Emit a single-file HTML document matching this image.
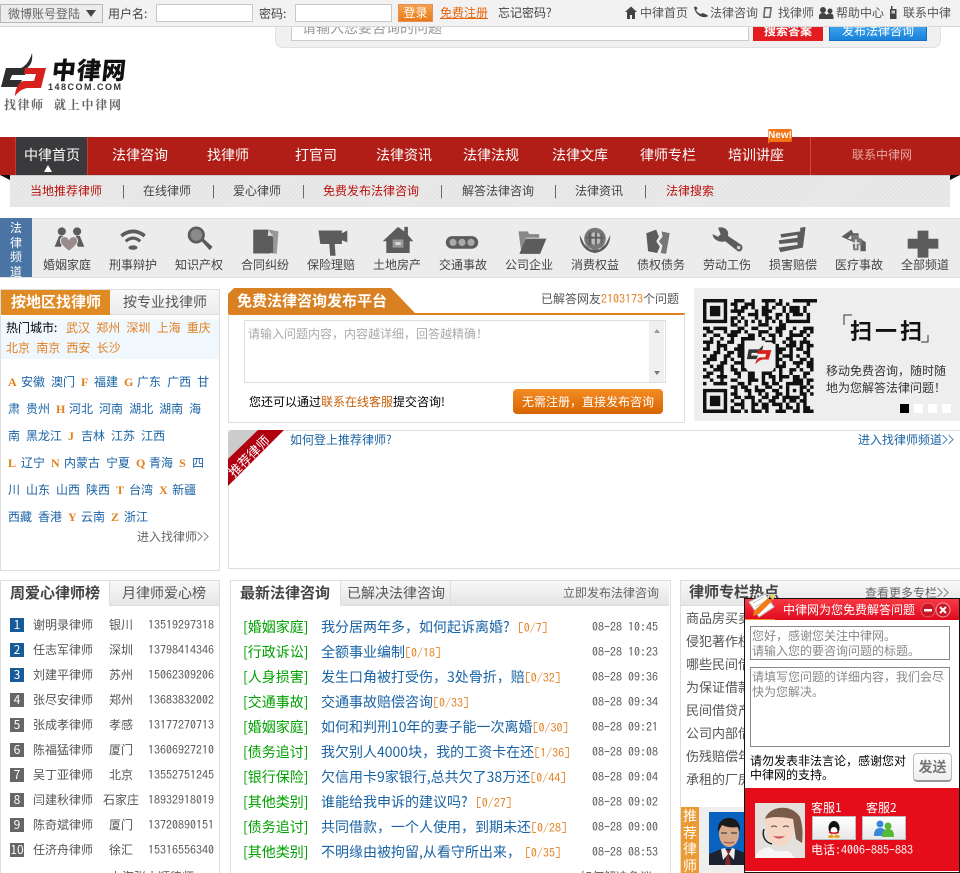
<!DOCTYPE html>
<html lang="zh"><head><meta charset="utf-8"><title>中律网</title>
<style>
html,body{margin:0;padding:0;background:#fff;width:960px;height:873px;overflow:hidden}
body{position:relative;font:12px/14px "WenQuanYi Zen Hei","Noto Sans CJK SC",sans-serif;color:#555}
div,span.a,svg.a{position:absolute}
#p{left:0;top:0;width:960px;height:873px;overflow:hidden}
.a,.t{position:absolute;white-space:nowrap}
.w{color:#fff}.o{color:#e08020}.b{color:#1a63a5}.r{color:#b8120e}
.n{font-size:14px;color:#fff;top:148px}
.s{top:184px;color:#444}
.c{top:258px;width:48px;text-align:center;color:#444}
.row{left:8px;white-space:nowrap;color:#1a63a5;height:14px}
.row span{margin-right:6px}
.row i{display:inline-block;width:13px;font:bold 12px/14px "Liberation Serif",serif;color:#e08020}
.rk{left:10px;width:14px;height:14px;color:#fff;text-align:center;line-height:14px;background:#666}
.rk.bl{background:#175c99}
.rl{left:33px;color:#555}.rc{left:100px;width:42px;text-align:center;color:#555}.rp{left:148px;color:#555}
.rp,.m3,.mn,.m2 em{font-family:"IPAGothic","Liberation Mono",monospace}
.m1{left:243px;color:#00a000;font-size:14px}
.m2{left:321px;color:#1a63a5;font-size:14px}
.m2 em{font-style:normal;font-size:12px;color:#e08020}
.m3{left:592px;color:#555}
.rr{left:686px;color:#555;width:58px;overflow:hidden;font-size:13px}
</style></head><body><div id="p">

<!-- top bar -->
<div style="left:0;top:0;width:960px;height:26px;background:#f2f2f2;border-bottom:1px solid #d8d8d8"></div>
<div style="left:0;top:4px;width:101px;height:17px;background:#ececec;border:1px solid #b8b8b8"></div>
<span class="a" style="left:8px;top:7px;color:#666">微博账号登陆</span>
<div style="left:86px;top:10px;width:0;height:0;border-left:5.5px solid transparent;border-right:5.5px solid transparent;border-top:7px solid #444"></div>
<span class="a" style="left:108px;top:7px;color:#444">用户名:</span>
<div style="left:156px;top:4px;width:95px;height:16px;background:#fff;border:1px solid #c8c8c8"></div>
<span class="a" style="left:259px;top:7px;color:#444">密码:</span>
<div style="left:295px;top:4px;width:95px;height:16px;background:#fff;border:1px solid #c8c8c8"></div>
<div style="left:398px;top:4px;width:33px;height:16px;background:linear-gradient(#f6a04a,#e87a18);border:1px solid #e0905a;color:#fff;text-align:center;line-height:15px">登录</div>
<span class="a" style="left:440px;top:6px;color:#e8640a;text-decoration:underline">免费注册</span>
<span class="a" style="left:498px;top:6px;color:#444">忘记密码?</span>
<span class="a" style="left:640px;top:6px">中律首页</span>
<span class="a" style="left:710px;top:6px">法律咨询</span>
<span class="a" style="left:778px;top:6px">找律师</span>
<span class="a" style="left:836px;top:6px">帮助中心</span>
<span class="a" style="left:903px;top:6px">联系中律</span>
<svg class="a" style="left:620px;top:0" width="340" height="26" fill="#444">
<path d="M5 12L11 6.500 17 12h-2v7h-3v-4h-2v4H7v-7z"/>
<path d="M74 7c2-1 3 0 3.500 1.500L76 10c1 2 3 3.500 5 4l1.500-1c2 .5 4 1.500 6 3l-2.500 1c-5 1-11-3-12-10z"/>
<path d="M144 7h8l-1.500 11h-7.500zM145.500 8.500l-.8 8h4.500l1-8z" fill-rule="evenodd" fill="#666"/>
<circle cx="203" cy="10" r="3"/><circle cx="210" cy="11" r="2.500"/><path d="M199 19v-3c0-2 2-3 4-3s3 1 3.500 2c.5-1 2-1.500 3.500-1.500 2 0 3.500 1 3.500 3v2.500z"/>
<path d="M270 9h6.500v10H270zM271 6h1.500v3H271z"/><rect x="271.500" y="10.500" width="3.500" height="3" fill="#ccc"/>
</svg>

<!-- search remnant -->
<div style="left:275px;top:27px;width:664px;height:20px;background:#f0f0f0;border:1px solid #e0e0e0;border-top:0;border-radius:0 0 8px 8px"></div>
<div style="left:291px;top:27px;width:456px;height:13px;background:#fff;border:1px solid #ccc;border-top:0;overflow:hidden"><span class="a" style="left:10px;top:-6px;color:#999;font-size:14px">请输入您要咨询的问题</span></div>
<div style="left:753px;top:27px;width:70px;height:14px;background:#e21c20;overflow:hidden;color:#fff;text-align:center;line-height:8px;font-weight:bold">搜索答案</div>
<div style="left:829px;top:27px;width:96px;height:13px;background:linear-gradient(#3aa2ee,#1a82d8);border:1px solid #1a70c0;border-top:0;overflow:hidden;color:#fff;text-align:center;line-height:8px">发布法律咨询</div>

<!-- logo -->
<svg class="a" style="left:0;top:50px" width="130" height="65">
<path d="M6 18H21C26 16 30 10 32 3 33 10 31 15 28 17L25 25H12L10 30H22L18 37H1Z" fill="#2e2e30"/>
<path d="M25 18H46L41 38H27C22 39 18 42 15 46 15 40 19 31 24 31H34L36 24H24Z" fill="#d8201c"/>
<text transform="translate(51,29) skewX(-6)" font-family="'Noto Sans CJK SC',sans-serif" font-size="24" font-weight="900" fill="#111" textLength="74">中律网</text>
<text x="48" y="40" font-family="'Liberation Sans',sans-serif" font-size="9" font-weight="bold" fill="#333" textLength="73">148COM.COM</text>
<text x="4" y="59" font-family="'Noto Serif CJK SC',serif" font-size="12" font-weight="700" fill="#666" textLength="39">找律师</text>
<text x="54" y="59" font-family="'Noto Serif CJK SC',serif" font-size="12" font-weight="700" fill="#666" textLength="67">就上中律网</text>
</svg>

<!-- main nav -->
<div style="left:0;top:137px;width:960px;height:38px;background:#b01e17"></div>
<div style="left:15px;top:137px;width:71px;height:38px;background:#3a3a3c;border:solid #c83a30;border-width:0 1px"></div>
<div style="left:44px;top:165px;width:0;height:0;border-left:4px solid transparent;border-right:4px solid transparent;border-bottom:7px solid #fff"></div>
<span class="a n" style="left:24px">中律首页</span>
<span class="a n" style="left:112px">法律咨询</span>
<span class="a n" style="left:207px">找律师</span>
<span class="a n" style="left:295px">打官司</span>
<span class="a n" style="left:376px">法律资讯</span>
<span class="a n" style="left:463px">法律法规</span>
<span class="a n" style="left:552px">法律文库</span>
<span class="a n" style="left:640px">律师专栏</span>
<span class="a n" style="left:728px">培训讲座</span>
<div style="left:810px;top:137px;width:1px;height:38px;background:#d8453c"></div>
<span class="a" style="left:852px;top:148px;color:#e6a8a0">联系中律网</span>
<div style="left:768px;top:129px;width:24px;height:13px;background:#f27414;border-radius:2px;color:#fff;font:bold 10px/13px 'Liberation Sans',sans-serif;text-align:center">New!</div>
<div style="left:768px;top:141px;width:0;height:0;border-top:3px solid #f27414;border-right:3px solid transparent"></div>

<!-- sub nav -->
<div style="left:10px;top:175px;width:940px;height:32px;background:repeating-linear-gradient(135deg,#e2e2e2 0 1px,#eaeaea 1px 3px);border-top:1px solid #ccc;box-sizing:border-box"></div>
<div style="left:0;top:175px;width:0;height:0;border-top:5px solid #111;border-left:10px solid transparent"></div>
<div style="left:950px;top:175px;width:0;height:0;border-top:5px solid #111;border-right:10px solid transparent"></div>
<span class="a s r" style="left:30px;color:#b8120e">当地推荐律师</span><span class="a s" style="left:122px">|</span>
<span class="a s" style="left:143px">在线律师</span><span class="a s" style="left:212px">|</span>
<span class="a s" style="left:233px">爱心律师</span><span class="a s" style="left:302px">|</span>
<span class="a s" style="left:323px;color:#b8120e">免费发布法律咨询</span><span class="a s" style="left:440px">|</span>
<span class="a s" style="left:462px">解答法律咨询</span><span class="a s" style="left:554px">|</span>
<span class="a s" style="left:575px">法律资讯</span><span class="a s" style="left:644px">|</span>
<span class="a s" style="left:666px;color:#b8120e">法律搜索</span>

<!-- channels -->
<div style="left:0;top:218px;width:960px;height:60px;background:#ececec;border-top:1px solid #e0e0e0;border-bottom:1px solid #e0e0e0;box-sizing:border-box"></div>
<div style="left:0;top:218px;width:32px;height:59px;background:#4a74a3;color:#fff;font-size:12px;line-height:14.700px;text-align:center;overflow:hidden;padding-top:3px;box-sizing:border-box">法<br>律<br>频<br>道</div>
<span class="a c" style="left:43px">婚姻家庭</span><span class="a c" style="left:109px">刑事辩护</span><span class="a c" style="left:175px">知识产权</span><span class="a c" style="left:241px">合同纠纷</span><span class="a c" style="left:307px">保险理赔</span><span class="a c" style="left:373px">土地房产</span><span class="a c" style="left:439px">交通事故</span><span class="a c" style="left:505px">公司企业</span><span class="a c" style="left:571px">消费权益</span><span class="a c" style="left:637px">债权债务</span><span class="a c" style="left:703px">劳动工伤</span><span class="a c" style="left:769px">损害赔偿</span><span class="a c" style="left:835px">医疗事故</span><span class="a c" style="left:901px">全部频道</span>
<svg class="a" style="left:0;top:0" width="960" height="260" fill="#5c5c5c">
<g transform="translate(51,226) scale(.9)"><circle cx="12" cy="6" r="4.500"/><circle cx="29" cy="6" r="4.500"/><path d="M4 23l5-12h4l2 4-4 8zM37 23l-5-12h-4l-2 4 4 8z"/><path d="M20 28C12 22 9 18 11 14c2-3 7-3 9 1 2-4 7-4 9-1 2 4-1 8-9 14z" fill="#9b8b8b" stroke="#ececec"/></g>
<g transform="translate(115,226) scale(.9)" fill="none" stroke="#5c5c5c"><path d="M7 11Q20 1 33 11" stroke-width="4"/><path d="M12 17Q20 10 28 17" stroke-width="3.500"/><ellipse cx="20" cy="24" rx="4.500" ry="2" fill="#5c5c5c" stroke-width="1"/></g>
<g transform="translate(181,226) scale(.9)"><circle cx="17" cy="10" r="8" fill="#8a8a8a" stroke="#5c5c5c" stroke-width="3"/><path d="M22 16l3-2 10 9-3 4z"/></g>
<g transform="translate(247,226) scale(.9)"><path d="M7 5h18v-1l10 2-2 25-7-1v1H7z" fill="#999"/><path d="M7 4h17l3 3 2 7v16H7z"/><path d="M24 4l5 7h-6z" fill="#ddd"/></g>
<g transform="translate(314,226) scale(.9)"><path d="M5 5h26v3l6-3v13l-6-2v4H23l1 13h-6l-1-13H7z"/></g>
<g transform="translate(380,226) scale(.9)"><path d="M20 1l7 5V1h4v9l6 7h-4v13H7V17H3z"/><rect x="14" y="15" width="12" height="9" fill="#999"/><rect x="17" y="18" width="6" height="3" fill="#ddd"/></g>
<g transform="translate(444,228) scale(.9)"><rect x="2" y="9" width="36" height="14" rx="7"/><circle cx="10" cy="16" r="4" fill="#aaa"/><circle cx="20" cy="16" r="4" fill="#aaa"/><circle cx="30" cy="16" r="4" fill="#aaa"/></g>
<g transform="translate(514,226) scale(.9)"><path d="M5 6h10l2 3h11v4H13L8 28z" fill="#888"/><path d="M13 14h23l-7 17H6z"/></g>
<g transform="translate(577,226) scale(.9)"><circle cx="20" cy="14" r="12" fill="#777"/><circle cx="20" cy="14" r="7" fill="#bbb"/><path d="M13 7h3v14h-3zM20 7h2v14h-2zM26 9h2v10h-2zM10 12h20v2H10z"/><path d="M3 10c0 12 8 19 17 20 9-1 17-8 17-20l-5 10-7 6h-10l-7-6z"/></g>
<g transform="translate(640,226) scale(.9)"><path d="M7 8l11-4 3 8-3 5 4 6-3 7-10-2z"/><path d="M24 6l9 2-4 23-6-1 2-8-4-5 4-5z" fill="#777"/></g>
<g transform="translate(709,226) scale(.9)"><path d="M4 9l6 3 3-3-3-7c7-2 13 3 11 9l15 10c3 3 0 9-4 7L18 17c-6 2-14-2-14-8z"/><circle cx="33" cy="24" r="2" fill="#ccc"/></g>
<g transform="translate(775,226) scale(.9)"><path d="M6 9l22-3v-4l6-1-3 23-25 5-2-5 21-3v-3L5 20l-1-4 21-3v-3L7 13z"/></g>
<g transform="translate(837,226) scale(.9)"><path d="M5 12L16 4l2 4-6 6 4 1V8h8v5l8 5v10h-6V18l-10-1z"/><path d="M17 10h7v4h4v7h-4v6h-6z" fill="#777"/><path d="M20 15h2v3h3v2h-3v5h-2v-5h-3v-2h3z" fill="#ddd"/></g>
<g transform="translate(905,227) scale(.9)"><path d="M14 4h12v9h11v11H26v10H14V24H3V13h11z"/></g>
</svg>

<!-- left region panel -->
<div style="left:0;top:289px;width:218px;height:280px;border:1px solid #ddd"></div>
<div style="left:1px;top:290px;width:109px;height:25px;background:#e08a24"></div>
<div style="left:110px;top:290px;width:109px;height:25px;background:linear-gradient(#f8f8f8,#ececec);border-bottom:1px solid #ddd;box-sizing:border-box"></div>
<span class="a" style="left:11px;top:295px;font-size:15px;font-weight:bold;color:#fff">按地区找律师</span>
<span class="a" style="left:123px;top:295px;font-size:14px;color:#555">按专业找律师</span>
<div style="left:1px;top:319px;width:218px;height:40px;background:#f0f8fe"></div>
<span class="a" style="left:6px;top:321px;color:#000">热门城市:</span>
<span class="a o" style="left:66px;top:321px;word-spacing:3.500px">武汉 郑州 深圳 上海 重庆</span>
<span class="a o" style="left:6px;top:341px;word-spacing:3.500px">北京 南京 西安 长沙</span>
<div class="row" style="top:375px"><i>A</i><span>安徽</span><span>澳门</span><i>F</i><span>福建</span><i>G</i><span>广东</span><span>广西</span><span>甘</span></div>
<div class="row" style="top:402px"><span>肃</span><span>贵州</span><i>H</i><span>河北</span><span>河南</span><span>湖北</span><span>湖南</span><span>海</span></div>
<div class="row" style="top:429px"><span>南</span><span>黑龙江</span><i>J</i><span>吉林</span><span>江苏</span><span>江西</span></div>
<div class="row" style="top:456px"><i>L</i><span>辽宁</span><i>N</i><span>内蒙古</span><span>宁夏</span><i>Q</i><span>青海</span><i>S</i><span>四</span></div>
<div class="row" style="top:483px"><span>川</span><span>山东</span><span>山西</span><span>陕西</span><i>T</i><span>台湾</span><i>X</i><span>新疆</span></div>
<div class="row" style="top:510px"><span>西藏</span><span>香港</span><i>Y</i><span>云南</span><i>Z</i><span>浙江</span></div>
<span class="a" style="left:137px;top:530px;color:#666">进入找律师<span class="mn">&gt;&gt;</span></span>

<!-- consult platform -->
<div style="left:228px;top:313px;width:455px;height:107px;border:1px solid #ddd;border-top:2px solid #e08020"></div>
<div style="left:228px;top:288px;width:187px;height:25px;background:#d98122;clip-path:polygon(0 6px,6px 0,163px 0,187px 100%,0 100%)"></div>
<span class="a" style="left:237px;top:294px;font-size:15px;font-weight:bold;color:#fff">免费法律咨询发布平台</span>
<span class="a" style="left:541px;top:292px;color:#555">已解答网友<span class="mn" style="color:#e08020">2103173</span>个问题</span>
<div style="left:244px;top:320px;width:420px;height:61px;border:1px solid #ddd;background:#fff"></div>
<div style="left:649px;top:321px;width:15px;height:61px;background:#f0f0f0"></div>
<div style="left:654px;top:329px;width:0;height:0;border-left:3.500px solid transparent;border-right:3.500px solid transparent;border-bottom:4px solid #999"></div>
<div style="left:654px;top:371px;width:0;height:0;border-left:3.500px solid transparent;border-right:3.500px solid transparent;border-top:4px solid #777"></div>
<span class="a" style="left:248px;top:327px;color:#aaa">请输入问题内容，内容越详细，回答越精确！</span>
<span class="a" style="left:249px;top:395px;color:#000">您还可以通过<span style="color:#c8600a">联系在线客服</span>提交咨询!</span>
<div style="left:513px;top:389px;width:150px;height:25px;background:linear-gradient(#f48c24,#d86400);border-radius:4px;color:#fff;text-align:center;line-height:25px">无需注册，直接发布咨询</div>

<!-- QR -->
<div style="left:694px;top:288px;width:266px;height:133px;background:#eee"></div>
<svg class="a" style="left:703px;top:299px" width="114" height="114" viewBox="0 0 33 33">
<path stroke="#111" fill="none" stroke-width="1" d="M0 .5h7m2 0h3m2 0h1m2 0h4m1 0h1m3 0h7M0 1.500h1m5 0h1m1 0h2m2 0h3m3 0h1m2 0h2m1 0h1m5 0h1M0 2.500h1m1 0h3m1 0h1m2 0h1m1 0h2m1 0h1m2 0h2m1 0h1m2 0h1m1 0h3m1 0h1M0 3.500h1m1 0h3m1 0h1m1 0h4m3 0h1m1 0h3m3 0h1m1 0h3m1 0h1M0 4.500h1m1 0h3m1 0h1m3 0h1m2 0h3m1 0h2m2 0h2m1 0h1m1 0h3m1 0h1M0 5.500h1m5 0h1m1 0h2m1 0h1m3 0h1m2 0h2m1 0h1m2 0h1m5 0h1M0 6.500h7m1 0h1m1 0h1m1 0h1m1 0h1m1 0h1m1 0h1m1 0h1m1 0h1m1 0h7"/>
<path stroke="#111" fill="none" stroke-width="1" d="M8 7.500h2m2 0h1m3 0h3m3 0h2M0 8.500h2m1 0h4m3 0h2m2 0h2m3 0h1m1 0h3m2 0h1m2 0h3M1 9.500h2m3 0h1m1 0h3m1 0h1m3 0h3m2 0h2m2 0h1m2 0h2m1 0h1M0 10.500h1m2 0h2m2 0h3m3 0h2m1 0h1m2 0h2m1 0h1m2 0h4m1 0h1M2 11.500h1m2 0h1m2 0h1m2 0h4m2 0h1m2 0h1m3 0h2m3 0h1M0 12.500h3m1 0h1m2 0h2m2 0h1m6 0h3m2 0h1m1 0h2m1 0h3M1 13.500h1m2 0h3m3 0h2m9 0h1m2 0h3m1 0h1m1 0h2M0 14.500h2m2 0h1m1 0h1m2 0h3m9 0h3m1 0h1m1 0h2m1 0h1M3 15.500h2m2 0h2m1 0h2m9 0h2m2 0h1m3 0h2M0 16.500h1m1 0h2m2 0h2m2 0h2m9 0h1m1 0h3m1 0h1m2 0h1M1 17.500h3m2 0h1m1 0h1m2 0h1m9 0h2m2 0h1m2 0h2m1 0h1M0 18.500h2m3 0h2m2 0h3m9 0h1m1 0h1m2 0h3m1 0h2M2 19.500h1m1 0h2m2 0h1m2 0h1m9 0h3m3 0h1m2 0h2M0 20.500h1m2 0h3m2 0h2m1 0h2m6 0h2m1 0h1m2 0h2m1 0h1m2 0h1M1 21.500h2m2 0h1m3 0h2m2 0h2m2 0h3m2 0h1m2 0h1m3 0h2M0 22.500h2m2 0h3m3 0h1m2 0h2m2 0h1m1 0h2m1 0h3m1 0h2m1 0h1M2 23.500h1m2 0h1m2 0h2m3 0h3m1 0h1m2 0h1m1 0h1m3 0h3m1 0h2M0 24.500h1m2 0h4m3 0h2m1 0h1m3 0h2m1 0h2m2 0h5m1 0h1"/>
<path stroke="#111" fill="none" stroke-width="1" d="M8 25.500h2m1 0h2m2 0h1m2 0h2m2 0h1m1 0h1m3 0h2m1 0h1M0 26.500h7m2 0h1m2 0h2m1 0h3m2 0h2m2 0h1m1 0h1m1 0h1m1 0h1M0 27.500h1m5 0h1m1 0h2m3 0h1m2 0h1m1 0h1m2 0h2m1 0h1m3 0h2m1 0h1M0 28.500h1m1 0h3m1 0h1m2 0h2m1 0h3m2 0h2m1 0h2m1 0h5m1 0h1M0 29.500h1m1 0h3m1 0h1m1 0h1m2 0h1m2 0h1m1 0h1m2 0h2m2 0h1m1 0h2m1 0h2M0 30.500h1m1 0h3m1 0h1m2 0h3m2 0h2m1 0h2m1 0h3m1 0h1m2 0h1m1 0h1M0 31.500h1m5 0h1m1 0h1m2 0h1m2 0h1m2 0h2m3 0h1m1 0h2m1 0h1m1 0h2M0 32.500h7m1 0h3m1 0h1m1 0h3m1 0h1m2 0h3m2 0h2m1 0h3"/>
<rect x="12.500" y="12.500" width="8" height="8.500" rx="1" fill="#eee"/>
<path d="M13.200 14.600h3l1.300-1.300-.4 1.800-.7.5h-2.300l-.2.8h2l-.4 1h-2.800z" fill="#333"/><path d="M16 14.800h3.800L19 17.500h-1.800c-.8.2-1.500.7-2 1.400 0-1 .6-2 1.500-2h1.300l.3-1h-2.600z" fill="#d8201c"/>
</svg>
<svg class="a" style="left:840px;top:310px" width="100" height="40">
<path d="M4 15V5h8M88 25v7h-7" fill="none" stroke="#333"/>
</svg>
<span class="a" style="left:850px;top:318px;font:bold 22px/24px 'Noto Sans CJK SC',sans-serif;color:#111;letter-spacing:3px">扫一扫</span>
<span class="a" style="left:826px;top:364px;color:#333">移动免费咨询，随时随</span>
<span class="a" style="left:826px;top:381px;color:#333">地为您解答法律问题！</span>
<div style="left:900px;top:404px;width:9px;height:9px;background:#000"></div>
<div style="left:914px;top:404px;width:9px;height:9px;background:#fff"></div>
<div style="left:928px;top:404px;width:9px;height:9px;background:#fff"></div>
<div style="left:942px;top:404px;width:9px;height:9px;background:#fff"></div>

<!-- recommended -->
<div style="left:228px;top:430px;width:732px;height:137px;border:1px solid #ddd;border-right:0"></div>
<svg class="a" style="left:228px;top:430px" width="60" height="60">
<path d="M0 6Q0 0 6 0H30L0 30z" fill="#ccc"/>
<path d="M30 0H56L0 56V29z" fill="#b00010"/>
<text transform="translate(6,48) rotate(-45)" font-family="'WenQuanYi Zen Hei',sans-serif" font-size="13" fill="#fff">推荐律师</text>
</svg>
<span class="a b" style="left:290px;top:433px">如何登上推荐律师?</span>
<span class="a b" style="left:858px;top:433px">进入找律师频道<span class="mn">&gt;&gt;</span></span>

<!-- ranking -->
<div style="left:0;top:580px;width:218px;height:300px;border:1px solid #ddd"></div>
<div style="left:109px;top:581px;width:110px;height:25px;background:linear-gradient(#f8f8f8,#e6e6e6);border-left:1px solid #ddd;border-bottom:1px solid #ddd;box-sizing:border-box"></div>
<span class="a" style="left:10px;top:586px;font-size:15px;font-weight:bold;color:#444">周爱心律师榜</span>
<span class="a" style="left:122px;top:586px;font-size:14px;color:#555">月律师爱心榜</span>
<div class="rk bl" style="top:618px">1</div><span class="a rl" style="top:618px">谢明录律师</span><span class="a rc" style="top:618px;left:100px">银川</span><span class="a rp" style="top:618px">13519297318</span>
<div class="rk bl" style="top:643px">2</div><span class="a rl" style="top:643px">任志军律师</span><span class="a rc" style="top:643px">深圳</span><span class="a rp" style="top:643px">13798414346</span>
<div class="rk bl" style="top:668px">3</div><span class="a rl" style="top:668px">刘建平律师</span><span class="a rc" style="top:668px">苏州</span><span class="a rp" style="top:668px">15062309206</span>
<div class="rk" style="top:693px">4</div><span class="a rl" style="top:693px">张尽安律师</span><span class="a rc" style="top:693px">郑州</span><span class="a rp" style="top:693px">13683832002</span>
<div class="rk" style="top:718px">5</div><span class="a rl" style="top:718px">张成孝律师</span><span class="a rc" style="top:718px">孝感</span><span class="a rp" style="top:718px">13177270713</span>
<div class="rk" style="top:743px">6</div><span class="a rl" style="top:743px">陈福猛律师</span><span class="a rc" style="top:743px">厦门</span><span class="a rp" style="top:743px">13606927210</span>
<div class="rk" style="top:768px">7</div><span class="a rl" style="top:768px">吴丁亚律师</span><span class="a rc" style="top:768px">北京</span><span class="a rp" style="top:768px">13552751245</span>
<div class="rk" style="top:793px">8</div><span class="a rl" style="top:793px">闫建秋律师</span><span class="a rc" style="top:793px">石家庄</span><span class="a rp" style="top:793px">18932918019</span>
<div class="rk" style="top:818px">9</div><span class="a rl" style="top:818px">陈奇斌律师</span><span class="a rc" style="top:818px">厦门</span><span class="a rp" style="top:818px">13720890151</span>
<div class="rk" style="top:843px">10</div><span class="a rl" style="top:843px">任济舟律师</span><span class="a rc" style="top:843px">徐汇</span><span class="a rp" style="top:843px">15316556340</span>
<span class="a" style="left:110px;top:870px">上海张小顺律师</span>

<!-- latest -->
<div style="left:230px;top:580px;width:439px;height:300px;border:1px solid #ddd"></div>
<div style="left:340px;top:581px;width:329px;height:25px;background:linear-gradient(#f8f8f8,#e4e4e4);border-left:1px solid #ddd;border-bottom:1px solid #ddd;box-sizing:border-box"></div>
<div style="left:450px;top:581px;width:1px;height:25px;background:#ddd"></div>
<span class="a" style="left:240px;top:586px;font-size:15px;font-weight:bold;color:#444">最新法律咨询</span>
<span class="a" style="left:347px;top:586px;font-size:14px;color:#555">已解决法律咨询</span>
<span class="a" style="left:563px;top:586px;color:#666">立即发布法律咨询</span>
<span class="a m1" style="top:620px">[婚姻家庭]</span><span class="a m2" style="top:620px">我分居两年多，如何起诉离婚? <em style="margin-left:5px">[0/7]</em></span><span class="a m3" style="top:620px">08-28 10:45</span>
<span class="a m1" style="top:645px">[行政诉讼]</span><span class="a m2" style="top:645px">全额事业编制<em>[0/18]</em></span><span class="a m3" style="top:645px">08-28 10:23</span>
<span class="a m1" style="top:670px">[人身损害]</span><span class="a m2" style="top:670px">发生口角被打受伤，3处骨折，赔<em>[0/32]</em></span><span class="a m3" style="top:670px">08-28 09:36</span>
<span class="a m1" style="top:695px">[交通事故]</span><span class="a m2" style="top:695px">交通事故赔偿咨询<em>[0/33]</em></span><span class="a m3" style="top:695px">08-28 09:34</span>
<span class="a m1" style="top:720px">[婚姻家庭]</span><span class="a m2" style="top:720px">如何和判刑10年的妻子能一次离婚<em>[0/30]</em></span><span class="a m3" style="top:720px">08-28 09:21</span>
<span class="a m1" style="top:745px">[债务追讨]</span><span class="a m2" style="top:745px">我欠别人4000块，我的工资卡在还<em>[1/36]</em></span><span class="a m3" style="top:745px">08-28 09:08</span>
<span class="a m1" style="top:770px">[银行保险]</span><span class="a m2" style="top:770px">欠信用卡9家银行,总共欠了38万还<em>[0/44]</em></span><span class="a m3" style="top:770px">08-28 09:04</span>
<span class="a m1" style="top:795px">[其他类别]</span><span class="a m2" style="top:795px">谁能给我申诉的建议吗? <em style="margin-left:5px">[0/27]</em></span><span class="a m3" style="top:795px">08-28 09:02</span>
<span class="a m1" style="top:820px">[债务追讨]</span><span class="a m2" style="top:820px">共同借款，一个人使用，到期未还<em>[0/28]</em></span><span class="a m3" style="top:820px">08-28 09:00</span>
<span class="a m1" style="top:845px">[其他类别]</span><span class="a m2" style="top:845px">不明缘由被拘留,从看守所出来，<em style="margin-left:4px">[0/35]</em></span><span class="a m3" style="top:845px">08-28 08:53</span>
<span class="a" style="top:870px;left:580px">如何解决争议</span>

<!-- right col -->
<div style="left:680px;top:580px;width:280px;height:300px;border:1px solid #ddd;border-right:0"></div>
<div style="left:681px;top:581px;width:279px;height:25px;background:linear-gradient(#f8f8f8,#e6e6e6);border-bottom:1px solid #ddd;box-sizing:border-box"></div>
<span class="a" style="left:689px;top:585px;font-size:15px;font-weight:bold;color:#444">律师专栏热点</span>
<span class="a" style="left:865px;top:586px;color:#666">查看更多专栏<span class="mn">&gt;&gt;</span></span>
<span class="a rr" style="top:611px">商品房买卖</span>
<span class="a rr" style="top:634px">侵犯著作权</span>
<span class="a rr" style="top:657px">哪些民间借</span>
<span class="a rr" style="top:680px">为保证借款</span>
<span class="a rr" style="top:703px">民间借贷产</span>
<span class="a rr" style="top:726px">公司内部借</span>
<span class="a rr" style="top:749px">伤残赔偿年</span>
<span class="a rr" style="top:772px">承租的厂房</span>
<div style="left:681px;top:807px;width:279px;height:66px;background:#eee"></div>
<div style="left:681px;top:807px;width:18px;height:66px;background:#ec9a34;color:#fff;font-size:14px;line-height:16.500px;text-align:center;padding-top:1px;box-sizing:border-box">推<br>荐<br>律<br>师</div>
<svg class="a" style="left:709px;top:812px" width="36" height="53">
<rect width="36" height="53" fill="#0a62c0"/>
<path d="M0 53V42l12-5h14l10 4v12z" fill="#1c2230"/>
<path d="M15 38h8l-3 6 2 9h-6l1-9z" fill="#7a2a2a"/><path d="M12 37l4-1 3 6-5 6zM26 37l-3-1-3 6 5 6z" fill="#eee"/>
<ellipse cx="20" cy="22" rx="10" ry="13" fill="#d8a888"/>
<path d="M9 20c-1-9 4-14 11-14s12 5 11 14l-2-5c-6 1-12 0-16-2z" fill="#1a1a1a"/>
<path d="M12 21h6M22 21h6" stroke="#555" stroke-width="1.500"/><path d="M15 30q5 2 10 0" stroke="#944" fill="none"/>
</svg>

<!-- popup -->
<div style="left:744px;top:598px;width:214px;height:273px;background:#fff;border:1px solid #111"></div>
<div style="left:745px;top:599px;width:214px;height:21px;background:linear-gradient(#f83a44,#e0081e)"></div>
<div style="left:745px;top:619px;width:30px;height:1px;background:#f09020"></div>
<span class="a" style="left:783px;top:603px;color:#fff">中律网为您免费解答问题</span>
<svg class="a" style="left:746px;top:590px" width="214" height="30">
<path d="M3 12L19 4l9 13-15 10z" fill="#fff" stroke="#bbb"/><path d="M7 13l11-6M9 17l11-6M12 21l9-5" stroke="#ccc"/>
<path d="M8 21L22 8l4 3-13 13-6 2z" fill="#ef7a18"/><path d="M23 6l3-2 3 2-2 4z" fill="#f0d060"/>
<circle cx="182" cy="20" r="7" fill="#c81828" stroke="#e85a60"/><rect x="178" y="19" width="8" height="2.500" fill="#fff"/>
<circle cx="197" cy="20" r="7" fill="#c81828" stroke="#f0a0a0"/><path d="M194 17l6 6M200 17l-6 6" stroke="#fff" stroke-width="2"/>
</svg>
<div style="left:750px;top:626px;width:196px;height:30px;border:1px solid #888;background:#fff;color:#888;line-height:15px;padding:1px">您好，感谢您关注中律网。<br>请输入您的要咨询问题的标题。</div>
<div style="left:750px;top:667px;width:196px;height:76px;border:1px solid #888;background:#fff;color:#888;line-height:15px;padding:1px">请填写您问题的详细内容，我们会尽快为您解决。</div>
<span class="a" style="left:750px;top:754px;color:#000">请勿发表非法言论，感谢您对</span>
<span class="a" style="left:750px;top:768px;color:#000">中律网的支持。</span>
<div style="left:913px;top:753px;width:37px;height:26px;border:1px solid #bbb;border-bottom:2px solid #999;border-radius:4px;background:linear-gradient(#fff,#eee);color:#777;font-size:14px;font-weight:bold;line-height:26px;text-align:center">发送</div>
<div style="left:745px;top:788px;width:214px;height:83px;background:#e60d1b"></div>
<svg class="a" style="left:755px;top:803px" width="50" height="55">
<rect width="50" height="55" fill="#e4e0dc"/>
<path d="M10 16C14 3 36 0 45 14c3 10 3 18 2 26l-6-4-3-20C28 16 18 14 10 16z" fill="#7a5a48"/>
<path d="M10 16c6-3 20-2 28 0 2 12-1 22-9 26-6 2-12-1-16-7z" fill="#f6d6c4"/>
<path d="M0 55c2-7 8-10 14-11l6 4h14l6 7z" fill="#f6f6f6"/>
<path d="M16 24q3-2 6 0M28 24q3-2 6 0" stroke="#444" fill="none"/>
<path d="M18 33q6 5 12 0-6 1-12 0z" fill="#c84a50"/>
<path d="M9 26c-2 6 0 13 8 15" stroke="#222" fill="none" stroke-width="1.500"/>
</svg>
<span class="a w" style="left:811px;top:801px">客服1</span>
<span class="a w" style="left:866px;top:801px">客服2</span>
<div style="left:812px;top:816px;width:42px;height:22px;background:linear-gradient(#fff,#e8e8e8);border:1px solid #bbb"></div>
<div style="left:862px;top:816px;width:42px;height:22px;background:linear-gradient(#fff,#e8e8e8);border:1px solid #bbb"></div>
<svg class="a" style="left:812px;top:816px" width="96" height="24">
<ellipse cx="22" cy="12" rx="5.500" ry="7" fill="#111"/><ellipse cx="22" cy="15" rx="3.500" ry="4" fill="#fff"/><path d="M17 15q5 3 10 0v2q-5 2-10 0z" fill="#d81818"/><ellipse cx="19" cy="20.500" rx="3" ry="1.500" fill="#e8a010"/><ellipse cx="25" cy="20.500" rx="3" ry="1.500" fill="#e8a010"/>
<circle cx="68" cy="8" r="3.500" fill="#3888d8"/><path d="M62 20c0-6 2-8 6-8s6 2 6 8z" fill="#3888d8"/>
<circle cx="76" cy="10" r="3.500" fill="#58b838"/><path d="M70 21c0-6 2-8 6-8s6 2 6 8z" fill="#58b838"/>
</svg>
<span class="a w" style="left:811px;top:843px">电话<span class="mn">:4006-885-883</span></span>
</div></body></html>
